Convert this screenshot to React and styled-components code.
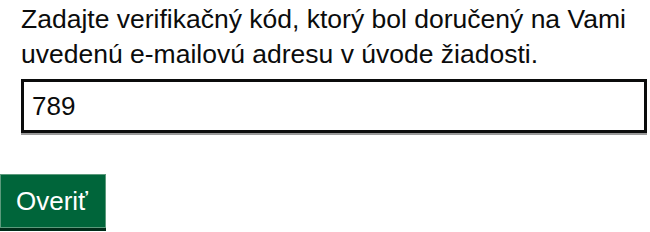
import styled, { createGlobalStyle } from "styled-components";

const GlobalStyle = createGlobalStyle`
  html, body {
    margin: 0;
    padding: 0;
    background: #ffffff;
  }
  body {
    font-family: "Liberation Sans", Arial, sans-serif;
    color: #0b0c0c;
  }
`;

const Page = styled.div`
  width: 650px;
  height: 232px;
  overflow: hidden;
  display: flex;
  flex-direction: column;
`;

const FormGroup = styled.div`
  padding: 2px 3px 0 21px;
  display: flex;
  flex-direction: column;
`;

const Hint = styled.label`
  font-size: 26.5px;
  line-height: 35px;
  margin: 0 0 7px;
  display: block;
`;

const CodeInput = styled.input`
  box-sizing: border-box;
  width: 100%;
  height: 54px;
  padding: 0 8px;
  border: 3px solid #0b0c0c;
  border-radius: 0;
  box-shadow: 0 2px 0 #9a9a9a;
  font-family: inherit;
  font-size: 26px;
  color: #0b0c0c;
  outline: none;
`;

const Actions = styled.div`
  margin-top: 41px;
  display: flex;
`;

const SubmitButton = styled.button`
  box-sizing: border-box;
  height: 54px;
  padding: 0 17px 0 15px;
  background: #00653a;
  border: 1px solid #5c9a7c;
  border-radius: 0;
  box-shadow: 0 3px 0 #002b18;
  color: #ffffff;
  font-family: inherit;
  font-size: 26px;
  cursor: pointer;
`;

export default function App() {
  return (
    <Page>
      <GlobalStyle />
      <FormGroup>
        <Hint htmlFor="kod">
          Zadajte verifikačný kód, ktorý bol doručený na Vami uvedenú e-mailovú adresu v úvode žiadosti.
        </Hint>
        <CodeInput id="kod" defaultValue="789" />
      </FormGroup>
      <Actions>
        <SubmitButton>Overiť</SubmitButton>
      </Actions>
    </Page>
  );
}
